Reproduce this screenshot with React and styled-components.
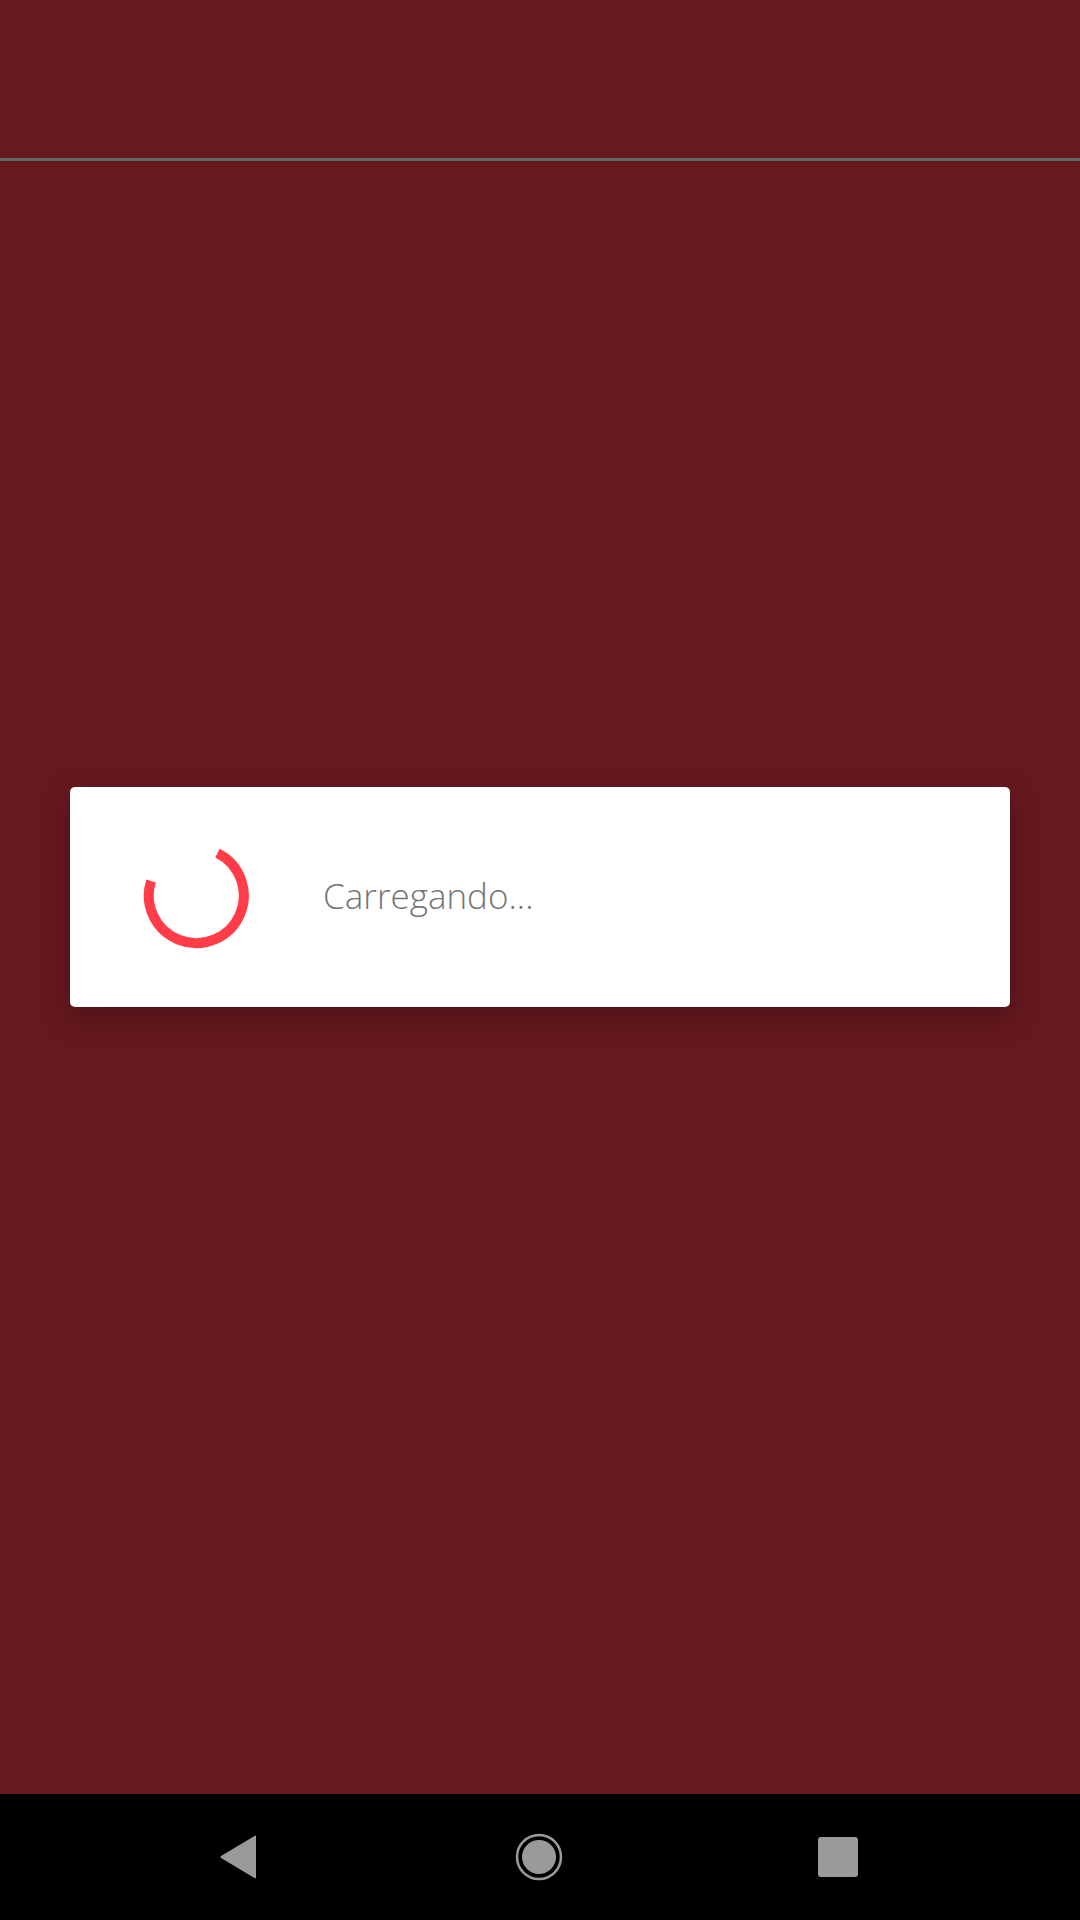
import styled, { createGlobalStyle } from 'styled-components';

const GlobalStyle = createGlobalStyle`
  html, body {
    margin: 0;
    padding: 0;
  }
  body {
    background: #66191f;
    font-family: 'Open Sans', 'Liberation Sans', sans-serif;
  }
`;

export default function App() {
  return (
    <Screen>
      <GlobalStyle />
      <TopBar />
      <Divider />
      <Content>
        <Dialog>
          <Spinner viewBox="0 0 106 106">
            <path
              d="M74.5 10.1 A47.5 47.5 0 1 1 8.1 38.0"
              fill="none"
              stroke="#ff3c48"
              strokeWidth="10"
            />
          </Spinner>
          <Message>Carregando...</Message>
        </Dialog>
      </Content>
      <NavBar>
        <NavIcon viewBox="0 0 40 44" width="40" height="44">
          <path d="M37 1.5 L37 42.5 Q37 44 35.5 43 L2 23 Q0.5 22 2 21 L35.5 1 Q37 0 37 1.5 Z" fill="#9a9a9a" />
        </NavIcon>
        <NavIcon viewBox="0 0 48 48" width="48" height="48">
          <circle cx="24" cy="24" r="22" fill="none" stroke="#9a9a9a" strokeWidth="2.5" />
          <circle cx="24" cy="24" r="17" fill="#9a9a9a" />
        </NavIcon>
        <NavIcon viewBox="0 0 40 40" width="40" height="40">
          <rect x="0" y="0" width="40" height="40" rx="3" fill="#9a9a9a" />
        </NavIcon>
      </NavBar>
    </Screen>
  );
}

const Screen = styled.div`
  width: 1080px;
  height: 1920px;
  display: flex;
  flex-direction: column;
  background: #66191f;
  overflow: hidden;
`;

const TopBar = styled.div`
  height: 158px;
  flex-shrink: 0;
`;

const Divider = styled.div`
  height: 3px;
  background: #666666;
  flex-shrink: 0;
`;

const Content = styled.div`
  flex: 1;
  padding: 626px 70px 0;
`;

const Dialog = styled.div`
  height: 220px;
  background: #ffffff;
  border-radius: 5px;
  box-shadow: 0 10px 30px rgba(0, 0, 0, 0.28);
  display: flex;
  align-items: center;
  padding-left: 73px;
  gap: 74px;
`;

const Spinner = styled.svg`
  width: 106px;
  height: 106px;
  flex-shrink: 0;
  margin-top: -2px;
`;

const Message = styled.span`
  font-size: 35px;
  font-weight: 300;
  color: #757575;
  margin-top: -4px;
`;

const NavBar = styled.div`
  height: 126px;
  flex-shrink: 0;
  background: #000000;
  display: flex;
  align-items: center;
  justify-content: space-between;
  padding: 0 222px 0 219px;
`;

const NavIcon = styled.svg`
  display: block;
`;
